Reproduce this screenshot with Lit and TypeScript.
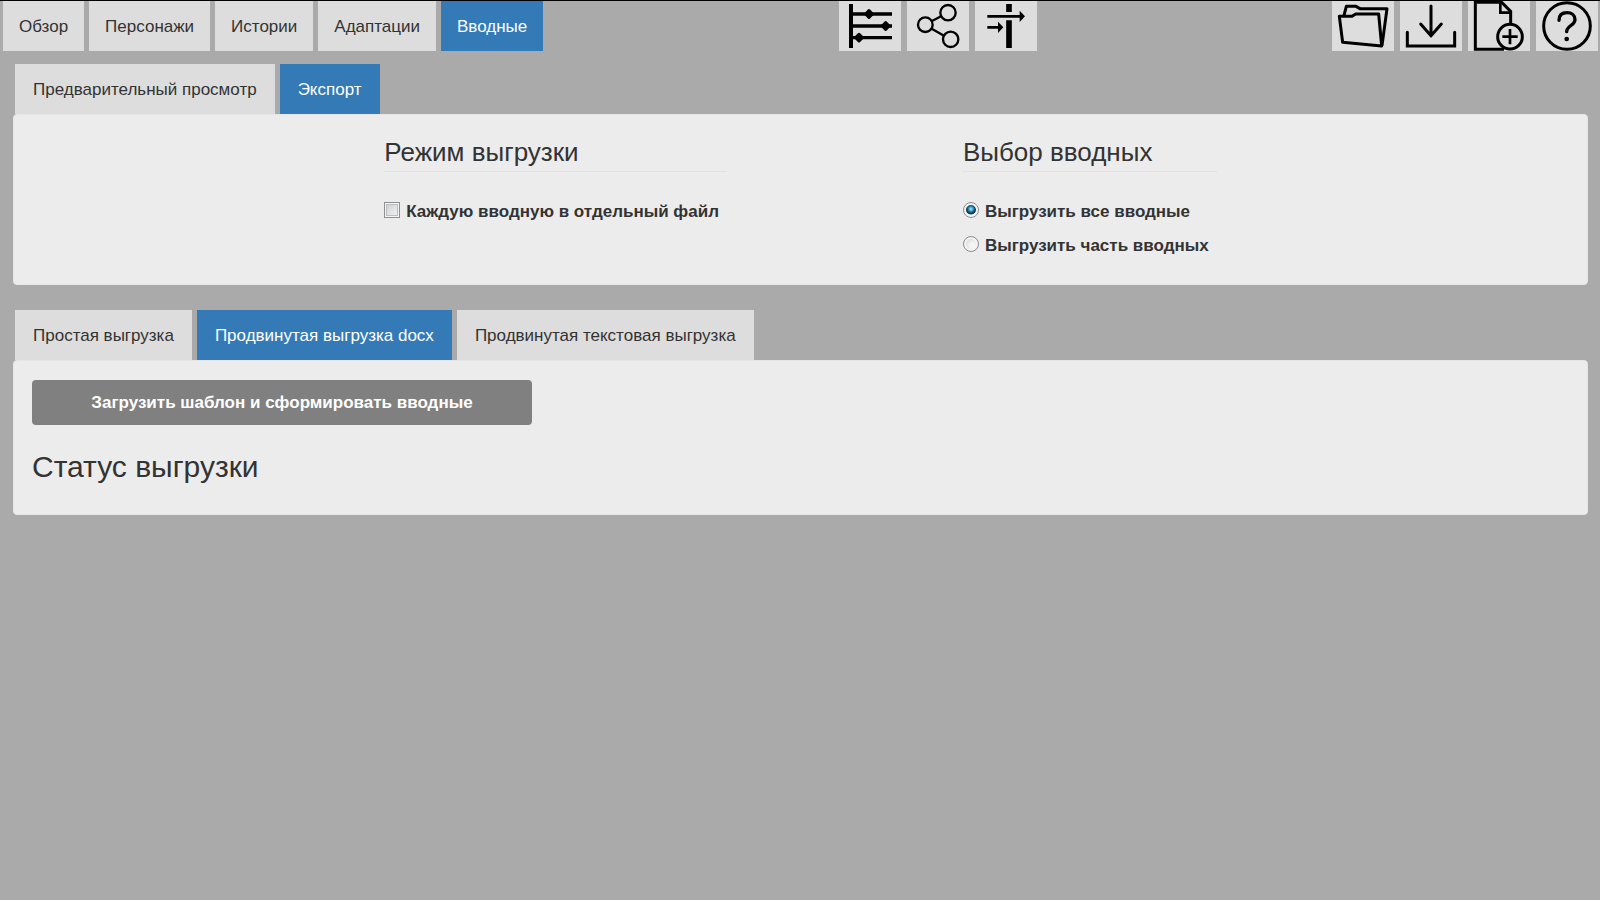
import { LitElement, html, css, svg } from "lit";
import { customElement, property, state } from "lit/decorators.js";

const toolIcons = {
  timeline: svg`
    <path d="M36 9V141" stroke-width="12"/>
    <path d="M36 39H159M36 75H159M36 110H159" stroke-width="10"/>
    <path d="M90 29L100 39L90 49L80 39ZM140 65L150 75L140 85L130 75ZM60 100L70 110L60 120L50 110Z" fill="#000" stroke-width="9" stroke-linejoin="round"/>`,
  network: svg`
    <circle cx="55" cy="71" r="22" stroke-width="7"/>
    <circle cx="123" cy="35" r="23" stroke-width="7"/>
    <circle cx="131" cy="115" r="23" stroke-width="7"/>
    <path d="M75 60L102 46M74 83L111 104" stroke-width="7"/>`,
  filter: svg`
    <path d="M102 9V33M102 58V141" stroke-width="17"/>
    <path d="M37 46H136M37 79H72" stroke-width="8"/>
    <path d="M134 29L150 46L134 63ZM69 62L85 79L69 96Z" fill="#000" stroke="none"/>`,
  open: svg`
    <path d="M22 46H60L71 39H140L149 135L32 124Z" stroke-width="9" stroke-linejoin="round"/>
    <path d="M36 43L43 16H72L84 23H165L150 134" stroke-width="9" stroke-linejoin="round"/>`,
  save: svg`
    <path d="M22 94V135H164V94" stroke-width="9" stroke-linecap="round"/>
    <path d="M93 15V104M62 69L93 104L124 69" stroke-width="9" stroke-linecap="round"/>`,
  create: svg`
    <path d="M108 145H22V4H101L128 31V68" stroke-width="9"/>
    <path d="M97 4V35H128" stroke-width="8"/>
    <circle cx="126" cy="107" r="37" stroke-width="9"/>
    <path d="M126 84V130M103 107H149" stroke-width="8"/>`,
  help: svg`
    <circle cx="93" cy="75" r="70" stroke-width="9"/>
    <path d="M69 58C69 42 79 35 93 35C107 35 117 43 117 56C117 73 92 74 92 92" stroke-width="10" stroke-linecap="round"/>
    <circle cx="92" cy="114" r="7" fill="#000" stroke="none"/>`,
};

type ToolName = keyof typeof toolIcons;

const shared = css`
  *, *::before, *::after { box-sizing: border-box; }
  button {
    margin: 0;
    border: 0;
    font: inherit;
    cursor: pointer;
  }
`;

@customElement("tab-strip")
class TabStrip extends LitElement {
  static styles = [shared, css`
    :host { display: block; }
    .tabs { display: flex; gap: 5px; }
    .tab {
      height: 50px;
      padding: 2px var(--tab-padding, 16px) 0;
      background: #ddd;
      color: #333;
      white-space: nowrap;
    }
    .tab.active { background: #337ab7; color: #fff; }
  `];

  @property({ attribute: false }) items: string[] = [];
  @property({ type: Number }) selected = 0;

  render() {
    return html`<div class="tabs" role="tablist">
      ${this.items.map((item, i) => html`<button
        class="tab ${i === this.selected ? "active" : ""}"
        role="tab"
        aria-selected=${i === this.selected ? "true" : "false"}
        @click=${() => { this.selected = i; }}
      >${item}</button>`)}
    </div>`;
  }
}

@customElement("tool-group")
class ToolGroup extends LitElement {
  static styles = [shared, css`
    :host { display: block; }
    .tools { display: flex; gap: 6px; }
    .tool { width: 62px; height: 50px; padding: 0; background: #ddd; }
    .icon { display: block; width: 62px; height: 50px; fill: none; stroke: #000; }
  `];

  @property({ attribute: false }) tools: [ToolName, string][] = [];

  render() {
    return html`<div class="tools">
      ${this.tools.map(([name, label]) => html`<button class="tool" aria-label=${label}>
        <svg class="icon" viewBox="0 0 186 150" aria-hidden="true">${toolIcons[name]}</svg>
      </button>`)}
    </div>`;
  }
}

@customElement("app-root")
class AppRoot extends LitElement {
  static styles = [shared, css`
    :host {
      display: block;
      min-height: 100vh;
      background: #aaa;
      border-top: 1px solid #000;
      box-sizing: border-box;
      color: #333;
      font-family: "Liberation Sans", Arial, sans-serif;
      font-size: 17px;
      line-height: 26px;
    }
    .bar {
      display: flex;
      justify-content: space-between;
      padding: 0 2px 0 3px;
    }
    .content { padding: 13px 12px 0 13px; }
    .strip { --tab-padding: 18px; padding-left: 2px; }
    .panel {
      background: #ececec;
      border: 1px solid #e6e6e6;
      border-radius: 4px;
    }
    .options {
      display: flex;
      justify-content: center;
      gap: 15%;
      padding: 21px 0 22px;
      margin-bottom: 25px;
    }
    .group { margin: 0; min-width: 0; }
    .title {
      margin: 0 0 22px;
      padding: 0 0 3px;
      border-bottom: 1px solid #e2e2e2;
      font-size: 26px;
      font-weight: 400;
      line-height: 32px;
    }
    .choice {
      display: flex;
      align-items: flex-start;
      gap: 6px;
      height: 34px;
      padding: 5px 8px 0 0;
      font-weight: 700;
    }
    .box, .radio {
      appearance: none;
      flex: none;
      width: 16px;
      height: 16px;
      margin: 3px 0 0;
      border: 1px solid #8e8f8f;
    }
    .box {
      background: linear-gradient(135deg, #c9cdd1, #f6f6f6);
      box-shadow: inset 0 0 0 1px #f4f4f4, inset 0 0 0 2px #b9bdc1;
    }
    .box:checked { background: #337ab7; }
    .radio {
      border-radius: 50%;
      background: radial-gradient(circle at 60% 60%, #f5f5f5 20%, #c0c4c8 100%);
      box-shadow: inset 0 0 0 2px #f4f4f4;
    }
    .radio:checked {
      background: radial-gradient(circle at 7px 6px, #b9ecfb 0, #3aa3cf 2px, #11405f 4px, #12364f 5px, #f4f4f4 6px);
    }
    .export { padding: 19px 18px 29px; }
    .load {
      display: block;
      width: 500px;
      max-width: 100%;
      height: 45px;
      padding: 0 10px;
      border-radius: 4px;
      background: #808080;
      color: #fff;
      font-weight: 700;
    }
    .status {
      margin: 24px 0 0;
      font-size: 30px;
      font-weight: 400;
      line-height: 36px;
    }
  `];

  @state() private scope = "all";

  render() {
    return html`
      <header class="bar">
        <tab-strip .items=${["Обзор", "Персонажи", "Истории", "Адаптации", "Вводные"]} .selected=${4}></tab-strip>
        <tool-group .tools=${[["timeline", "Хронология"], ["network", "Социальная сеть"], ["filter", "Фильтр"]]}></tool-group>
        <tool-group .tools=${[["open", "Открыть базу"], ["save", "Сохранить базу"], ["create", "Новая база"], ["help", "Справка"]]}></tool-group>
      </header>
      <main class="content">
        <tab-strip class="strip" .items=${["Предварительный просмотр", "Экспорт"]} .selected=${1}></tab-strip>
        <section class="panel options">
          <div class="group">
            <h3 class="title">Режим выгрузки</h3>
            <label class="choice"><input class="box" type="checkbox"><span>Каждую вводную в отдельный файл</span></label>
          </div>
          <div class="group" role="radiogroup" aria-labelledby="scope-title">
            <h3 class="title" id="scope-title">Выбор вводных</h3>
            <label class="choice"><input class="radio" type="radio" name="scope" .checked=${this.scope === "all"} @change=${() => { this.scope = "all"; }}><span>Выгрузить все вводные</span></label>
            <label class="choice"><input class="radio" type="radio" name="scope" .checked=${this.scope === "part"} @change=${() => { this.scope = "part"; }}><span>Выгрузить часть вводных</span></label>
          </div>
        </section>
        <tab-strip class="strip" .items=${["Простая выгрузка", "Продвинутая выгрузка docx", "Продвинутая текстовая выгрузка"]} .selected=${1}></tab-strip>
        <section class="panel export">
          <button class="load">Загрузить шаблон и сформировать вводные</button>
          <h2 class="status">Статус выгрузки</h2>
        </section>
      </main>
    `;
  }
}
